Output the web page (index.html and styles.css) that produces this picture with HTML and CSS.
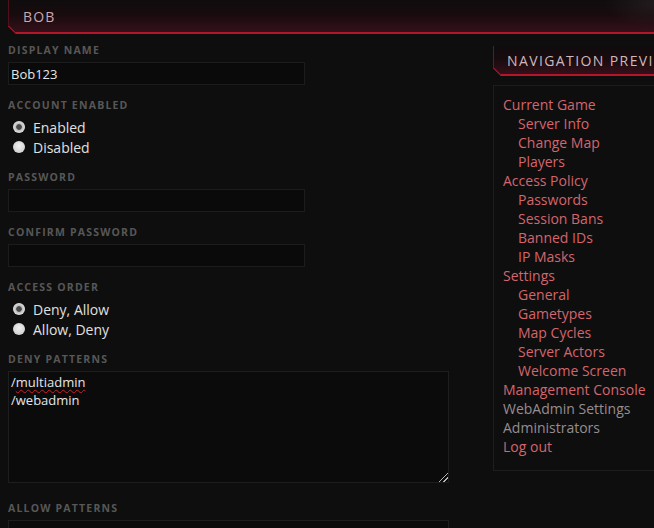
FILE: index.html
```html
<!DOCTYPE html>
<html lang="en">
<head>
<meta charset="utf-8">
<title>BOB - Administrators</title>
<link rel="stylesheet" href="styles.css">
</head>
<body>
<header class="page-title">
  <h1>BOB</h1>
</header>

<div class="layout">
  <form class="admin-form">
    <div class="field">
      <label class="field-label" for="displayname">DISPLAY NAME</label>
      <input class="text-input" id="displayname" type="text" value="Bob123">
    </div>

    <div class="field">
      <span class="field-label">ACCOUNT ENABLED</span>
      <label class="choice"><input type="radio" name="enabled" checked> Enabled</label>
      <label class="choice"><input type="radio" name="enabled"> Disabled</label>
    </div>

    <div class="field">
      <label class="field-label" for="password">PASSWORD</label>
      <input class="text-input" id="password" type="password">
    </div>

    <div class="field">
      <label class="field-label" for="password2">CONFIRM PASSWORD</label>
      <input class="text-input" id="password2" type="password">
    </div>

    <div class="field">
      <span class="field-label">ACCESS ORDER</span>
      <label class="choice"><input type="radio" name="order" checked> Deny, Allow</label>
      <label class="choice"><input type="radio" name="order"> Allow, Deny</label>
    </div>

    <div class="field">
      <span class="field-label">DENY PATTERNS</span>
      <div class="textbox" role="textbox" aria-multiline="true">
        <div>/<span class="misspelt">multiadmin</span></div>
        <div>/webadmin</div>
      </div>
    </div>

    <div class="field">
      <span class="field-label">ALLOW PATTERNS</span>
      <div class="textbox" role="textbox" aria-multiline="true"></div>
    </div>
  </form>

  <aside class="nav-preview">
    <h2 class="box-title">NAVIGATION PREVIEW</h2>
    <ul class="nav-tree">
      <li>Current Game
        <ul>
          <li>Server Info</li>
          <li>Change Map</li>
          <li>Players</li>
        </ul>
      </li>
      <li>Access Policy
        <ul>
          <li>Passwords</li>
          <li>Session Bans</li>
          <li>Banned IDs</li>
          <li>IP Masks</li>
        </ul>
      </li>
      <li>Settings
        <ul>
          <li>General</li>
          <li>Gametypes</li>
          <li>Map Cycles</li>
          <li>Server Actors</li>
          <li>Welcome Screen</li>
        </ul>
      </li>
      <li>Management Console</li>
      <li class="muted">WebAdmin Settings</li>
      <li class="muted">Administrators</li>
      <li>Log out</li>
    </ul>
  </aside>
</div>
</body>
</html>
```

FILE: styles.css
```css
html, body {
  margin: 0;
  padding: 0;
}

body {
  background: #0e0e0e;
  color: #e2e2e2;
  font-family: "Open Sans", "DejaVu Sans", sans-serif;
  overflow: hidden;
}

/* ---- red bevelled title bars ---- */
.page-title,
.box-title {
  position: relative;
  box-sizing: border-box;
  border-left: 1px solid #4e1119;
  border-bottom: 2px solid #b5172a;
  background:
    radial-gradient(ellipse 50px 24px at 100% 10%, rgba(80, 72, 74, 0.25), transparent),
    linear-gradient(to bottom, #0f0c0d 0%, #180b0e 45%, #34101a 100%);
  white-space: nowrap;
}

.page-title::after,
.box-title::after {
  content: "";
  position: absolute;
  left: -1px;
  bottom: -2px;
  width: 8px;
  height: 8px;
  background: linear-gradient(to top right, #0e0e0e 0 44%, #8c1424 44% 58%, transparent 58%);
}

.page-title {
  margin-left: 8px;
  height: 34px;
}

.page-title h1 {
  margin: 0;
  padding: 1px 0 0 14px;
  font-size: 14px;
  font-weight: 400;
  line-height: 31px;
  letter-spacing: 1.1px;
  color: #c9a8ae;
}

/* ---- two column body ---- */
.layout {
  display: flex;
  align-items: flex-start;
  padding-left: 8px;
}

.admin-form {
  flex: none;
  width: 441px;
  padding-top: 9px;
}

.field {
  margin-bottom: 13px;
}

.field-label {
  display: block;
  margin-bottom: 5px;
  font-size: 10.5px;
  font-weight: 700;
  line-height: 14px;
  letter-spacing: 1.2px;
  color: #575757;
}

.text-input {
  display: block;
  box-sizing: border-box;
  width: 297px;
  height: 23px;
  margin: 0;
  padding: 0 2px;
  border: 1px solid #1c1c1c;
  background: #0a0a0a;
  color: #e6e6e6;
  font: 13px "Open Sans", sans-serif;
  outline: none;
}

/* radio choices */
.choice {
  display: flex;
  align-items: center;
  height: 20px;
  font-size: 14px;
  color: #e0e0e0;
}

.choice:first-of-type {
  margin-top: 5px;
}

.choice input {
  appearance: none;
  -webkit-appearance: none;
  flex: none;
  width: 12px;
  height: 12px;
  margin: -1px 8px 0 5px;
  border-radius: 50%;
  background: radial-gradient(circle at 50% 40%, #f0f0f0, #c6c6c6);
}

.choice input:checked {
  background: radial-gradient(circle, #4a4a4a 0 2.4px, #bdbdbd 3.2px, #e2e2e2 6px);
}

/* multi-line pattern boxes */
.textbox {
  position: relative;
  box-sizing: border-box;
  width: 441px;
  height: 112px;
  padding: 1px 2px;
  border: 1px solid #1e1e1e;
  background: #0b0b0b;
  font-size: 13px;
  line-height: 18px;
  color: #e6e6e6;
}

.field:nth-last-child(2) {
  margin-bottom: 18px;
}

.textbox::after {
  content: "";
  position: absolute;
  right: 0;
  bottom: 0;
  width: 9px;
  height: 9px;
  background: linear-gradient(135deg,
    transparent 0 46%, #b5b5b5 46% 53%, transparent 53% 72%, #b5b5b5 72% 79%, transparent 79%);
}

.misspelt {
  text-decoration: underline wavy #d0202a;
  text-decoration-thickness: 1px;
  text-underline-offset: 2px;
}

/* ---- navigation preview ---- */
.nav-preview {
  flex: none;
  width: 240px;
  margin-left: 44px;
  padding-top: 12px;
}

.box-title {
  margin: 0;
  height: 30px;
  padding: 0 0 0 13px;
  font-size: 14px;
  font-weight: 400;
  line-height: 29px;
  letter-spacing: 1.4px;
  color: #cdb9bc;
  border-left-color: #6a1522;
}

.nav-tree {
  list-style: none;
  margin: 9px 0 0;
  padding: 9px 0 14px 9px;
  border-top: 1px solid #1c1c1c;
  border-left: 1px solid #1e1e1e;
  border-bottom: 1px solid #1e1e1e;
  font-size: 14px;
  line-height: 19px;
  color: #d4656d;
  white-space: nowrap;
}

.nav-tree ul {
  list-style: none;
  margin: 0;
  padding-left: 15px;
}

.nav-tree .muted {
  color: #968d90;
}
```
